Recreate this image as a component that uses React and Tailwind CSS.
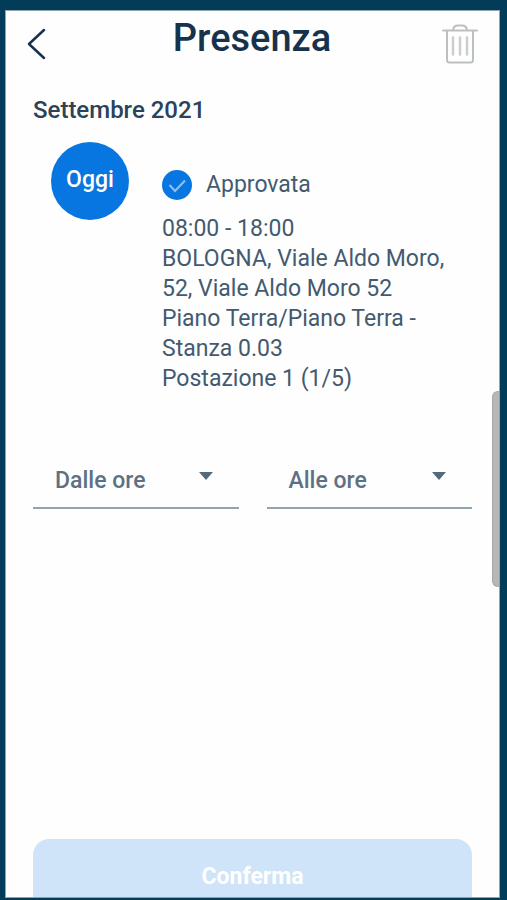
import React from "react";

function BackIcon() {
  return (
    <svg viewBox="0 0 20 32" className="h-8 w-5" fill="none" stroke="#17324d" strokeWidth="2.5" strokeLinecap="round" strokeLinejoin="round" aria-hidden="true">
      <path d="M18 2 3 16l15 14" />
    </svg>
  );
}

function TrashIcon() {
  return (
    <svg viewBox="0 0 36 40" className="h-10 w-9" fill="none" stroke="#bcc0c3" strokeWidth="2" strokeLinecap="round" aria-hidden="true">
      <path d="M1 6.500h34M5 7v29q0 2.500 2.500 2.500h21q2.500 0 2.500-2.500V7M11 6q.5-4.500 5-4.500h4q4.500 0 5 4.500" />
      <path d="M11 13.500v17M18 13.500v17M25 13.500v17" stroke="#cbcecf" strokeWidth="2.500" />
    </svg>
  );
}

function CheckIcon() {
  return (
    <svg viewBox="0 0 30 30" className="size-[30px] shrink-0" aria-hidden="true">
      <circle cx="15" cy="15" r="15" fill="#0876e0" />
      <path d="m7.500 15 5.500 6L23 10.500" fill="none" stroke="#8fc2f3" strokeWidth="2" />
    </svg>
  );
}

function TimeSelect({ id, label }) {
  const [value, setValue] = React.useState("");
  return (
    <div className="relative flex-1">
      {value === "" && (
        <label htmlFor={id} className="pointer-events-none absolute left-[22px] top-4 text-[23px] font-medium leading-[30px] text-[#5e7182]">
          {label}
        </label>
      )}
      <select
        id={id}
        aria-label={label}
        value={value}
        onChange={(e) => setValue(e.target.value)}
        className="block h-[59px] w-full appearance-none rounded-none border-b-2 border-[#91a4ae] bg-transparent px-[22px] text-[23px] font-medium text-[#5e7182]"
      >
        <option value=""></option>
        <option>08:00</option>
        <option>18:00</option>
      </select>
      <svg viewBox="0 0 14 8" className="pointer-events-none absolute right-[26px] top-[22px] h-2 w-3.5" fill="#536a7d" aria-hidden="true">
        <path d="M0 0h14L7 8z" />
      </svg>
    </div>
  );
}

export default function App() {
  return (
    <div className="h-screen bg-[#023c58] pb-0.5 pl-[5px] pr-[7px] pt-2.5 font-['Roboto',sans-serif] text-[#435a70]">
      <div className="relative h-full overflow-hidden border border-[#8da5b1] bg-[#fefefe]">
        <header className="flex h-[68px] items-start justify-between pl-5 pr-[21px]">
          <button type="button" aria-label="Indietro" className="mt-[17px] w-9">
            <BackIcon />
          </button>
          <h1 className="mt-1 text-[38px] font-medium leading-[46px] text-[#17324d]">Presenza</h1>
          <button type="button" aria-label="Elimina" className="mt-[13px]">
            <TrashIcon />
          </button>
        </header>
        <main className="px-[27px]">
          <h2 className="mt-4 text-2xl font-medium leading-[30px] text-[#2b4259]">Settembre 2021</h2>
          <section className="mt-[17px] flex items-start pl-[18px]">
            <div className="flex size-[78px] shrink-0 items-center justify-center rounded-full bg-[#0876e0] pb-0.5 text-[23px] font-medium text-white">Oggi</div>
            <div className="ml-[33px] pt-7 text-[23px] leading-[30px]">
              <div className="flex items-center gap-3.5">
                <CheckIcon />
                <span>Approvata</span>
              </div>
              <p className="mt-3.5">08:00 - 18:00</p>
              <p>BOLOGNA, Viale Aldo Moro,<br />52, Viale Aldo Moro 52</p>
              <p>Piano Terra/Piano Terra -<br />Stanza 0.03</p>
              <p>Postazione 1 (1/5)</p>
            </div>
          </section>
          <form className="mt-14" onSubmit={(e) => e.preventDefault()}>
            <div className="flex gap-7">
              <TimeSelect id="from" label="Dalle ore" />
              <TimeSelect id="to" label="Alle ore" />
            </div>
            <button type="submit" disabled className="mt-[330px] h-[76px] w-full rounded-2xl bg-[#cfe4f8] text-[23px] font-bold text-white">Conferma</button>
          </form>
        </main>
        <div className="absolute right-0 top-[380px] h-[196px] w-[7px] rounded-l-md border border-r-0 border-[#a5a8a9] bg-[#b6b8b8]" />
      </div>
    </div>
  );
}
